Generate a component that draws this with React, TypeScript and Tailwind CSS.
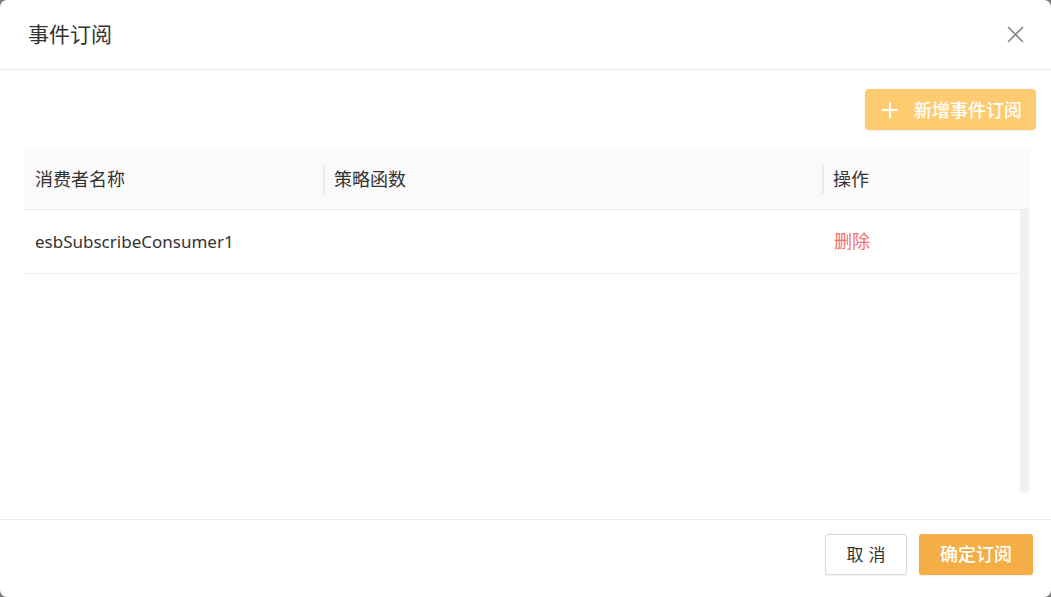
import React from "react";

const font = { fontFamily: '"Noto Sans", "Noto Sans CJK SC", sans-serif' };

export default function App() {
  return (
    <div className="w-[1051px] h-[597px] bg-[#7b7b7b]" style={font}>
      <div className="w-full h-full bg-white rounded-[7px] flex flex-col">
        <div className="h-[70px] shrink-0 flex items-center justify-between pl-[28px] pr-[27px] border-b border-[#ebebeb]">
          <div className="text-[21px] text-[#333] leading-none">事件订阅</div>
          <svg width="17" height="17" viewBox="0 0 17 17" className="text-[#888]">
            <path d="M1 1L16 16M16 1L1 16" stroke="currentColor" strokeWidth="1.6" />
          </svg>
        </div>
        <div className="flex-1 flex flex-col pl-[24px] pr-[22px] pt-[19px]">
          <div className="flex justify-end mr-[-7px]">
            <button className="h-[41px] w-[171px] rounded-[4px] bg-[#ffcb70] text-white flex items-center pl-[16px] gap-[15px] shadow-[0_1px_2px_rgba(0,0,0,0.08)]">
              <svg width="18" height="18" viewBox="0 0 18 18">
                <path d="M9 1V17M1 9H17" stroke="white" strokeWidth="2" />
              </svg>
              <span className="text-[18px] font-medium leading-none">新增事件订阅</span>
            </button>
          </div>
          <div className="mt-[19px] flex flex-col">
            <div className="h-[61px] bg-[#fafafa] border-b border-[#ececec] flex items-center text-[18px] text-[#333]">
              <div className="w-[299px] pl-[11px]">消费者名称</div>
              <div className="w-[499px] h-[30px] border-l-2 border-[#ececec] pl-[9px] flex items-center">策略函数</div>
              <div className="flex-1 h-[30px] border-l-2 border-[#ececec] pl-[9px] flex items-center">操作</div>
            </div>
            <div className="flex h-[283px]">
              <div className="flex-1">
                <div className="h-[64px] border-b border-[#ececec] flex items-center text-[17px] text-[#333]">
                  <div className="w-[299px] pl-[11px]">esbSubscribeConsumer1</div>
                  <div className="w-[499px]"></div>
                  <div className="flex-1 pl-[12px] text-[18px] text-[#f4706f]">删除</div>
                </div>
              </div>
              <div className="w-[9px] bg-[#f1f1f1] rounded-b-[3px]"></div>
            </div>
          </div>
        </div>
        <div className="h-[78px] shrink-0 border-t border-[#ebebeb] flex justify-end items-start pt-[14px] pr-[18px] gap-[12px]">
          <button className="h-[41px] w-[82px] rounded-[3px] border border-[#d9d9d9] bg-white text-[#333] text-[17px] tracking-[5px] pl-[5px] shadow-[0_1px_2px_rgba(0,0,0,0.06)]">取消</button>
          <button className="h-[41px] w-[114px] rounded-[3px] bg-[#f5ae45] text-white text-[18px] font-medium shadow-[0_1px_2px_rgba(0,0,0,0.08)]">确定订阅</button>
        </div>
      </div>
    </div>
  );
}
